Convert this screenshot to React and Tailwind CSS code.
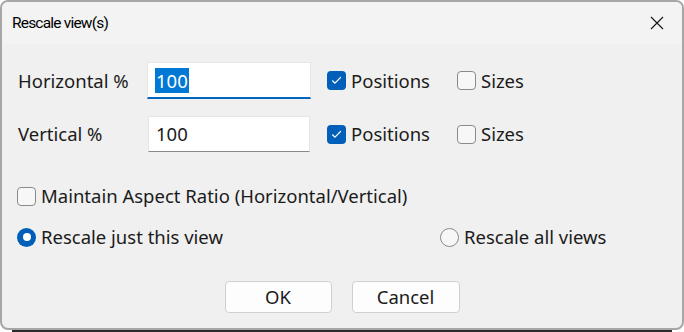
import React from 'react';

const font = { fontFamily: '"Noto Sans", "Open Sans", sans-serif' };

function CheckBox({ checked, label }) {
  return (
    <label className="flex items-center gap-[5px]">
      {checked ? (
        <span className="flex h-[19px] w-[19px] items-center justify-center rounded-[4px] bg-[#005fb8]">
          <svg width="11" height="9" viewBox="0 0 11 9" fill="none">
            <path d="M1.5 4.8 L4 7.2 L9.5 1.5" stroke="#ffffff" strokeWidth="1.2" strokeLinecap="round" strokeLinejoin="round" />
          </svg>
        </span>
      ) : (
        <span className="h-[19px] w-[19px] rounded-[4px] border border-[#8a8a8a] bg-[#f7f7f7]" />
      )}
      <span>{label}</span>
    </label>
  );
}

function Radio({ checked, label }) {
  return (
    <label className="flex items-center gap-[5px]">
      {checked ? (
        <span className="flex h-[19px] w-[19px] items-center justify-center rounded-full bg-[#005fb8]">
          <span className="h-[8px] w-[8px] rounded-full bg-white" />
        </span>
      ) : (
        <span className="h-[19px] w-[19px] rounded-full border border-[#8a8a8a] bg-[#f7f7f7]" />
      )}
      <span>{label}</span>
    </label>
  );
}

export default function App() {
  return (
    <div className="h-[332px] w-[684px] bg-white text-[18.5px] leading-[22px] text-[#1b1b1b]" style={font}>
      <div className="flex h-[330px] flex-col overflow-hidden rounded-[8px] border-2 border-[#a6a6a6] bg-[#f0f0f0]">
        {/* title bar */}
        <div className="flex h-[42px] shrink-0 items-center justify-between bg-[#f3f3f3] pl-[10px] pr-[18px]">
          <span className="font-['Roboto'] text-[15.5px] tracking-[-0.8px] text-[#000]">Rescale view(s)</span>
          <svg width="14" height="14" viewBox="0 0 14 14">
            <path d="M1 1 L13 13 M13 1 L1 13" stroke="#1a1a1a" strokeWidth="1.2" />
          </svg>
        </div>

        <div className="flex flex-col pl-[15px]">
          {/* horizontal */}
          <div className="mt-[18px] flex h-[37px] items-center">
            <span className="ml-px w-[129px]">Horizontal %</span>
            <div className="flex h-[37px] w-[164px] items-center border border-b-2 border-[#e6e6e6] border-b-[#0067c0] bg-white pl-[7px]">
              <span className="bg-[#0078d4] px-px leading-[25px] text-white">100</span>
            </div>
            <div className="ml-[16px] w-[130px]">
              <CheckBox checked label="Positions" />
            </div>
            <CheckBox label="Sizes" />
          </div>

          {/* vertical */}
          <div className="mt-[17px] flex h-[36px] items-center">
            <span className="ml-px w-[130px]">Vertical %</span>
            <div className="flex h-[36px] w-[162px] items-center border border-[#e6e6e6] border-b-[#8a8a8a] bg-white pl-[7px]">
              <span>100</span>
            </div>
            <div className="ml-[17px] w-[130px]">
              <CheckBox checked label="Positions" />
            </div>
            <CheckBox label="Sizes" />
          </div>

          <div className="mt-[33px] flex h-[22px] items-center">
            <CheckBox label="Maintain Aspect Ratio (Horizontal/Vertical)" />
          </div>

          <div className="mt-[19px] flex h-[22px] items-center">
            <div className="w-[423px]">
              <Radio checked label="Rescale just this view" />
            </div>
            <Radio label="Rescale all views" />
          </div>

          <div className="mt-[33px] flex justify-center gap-[20px] pr-[15px]">
            <button className="h-[32px] w-[107px] rounded-[4px] border border-[#d0d0d0] bg-[#fdfdfd]">OK</button>
            <button className="h-[32px] w-[108px] rounded-[4px] border border-[#d0d0d0] bg-[#fdfdfd]">Cancel</button>
          </div>
        </div>
      </div>
      <div className="mx-[12px] h-[2px] bg-[#2b2b2b]" />
    </div>
  );
}
